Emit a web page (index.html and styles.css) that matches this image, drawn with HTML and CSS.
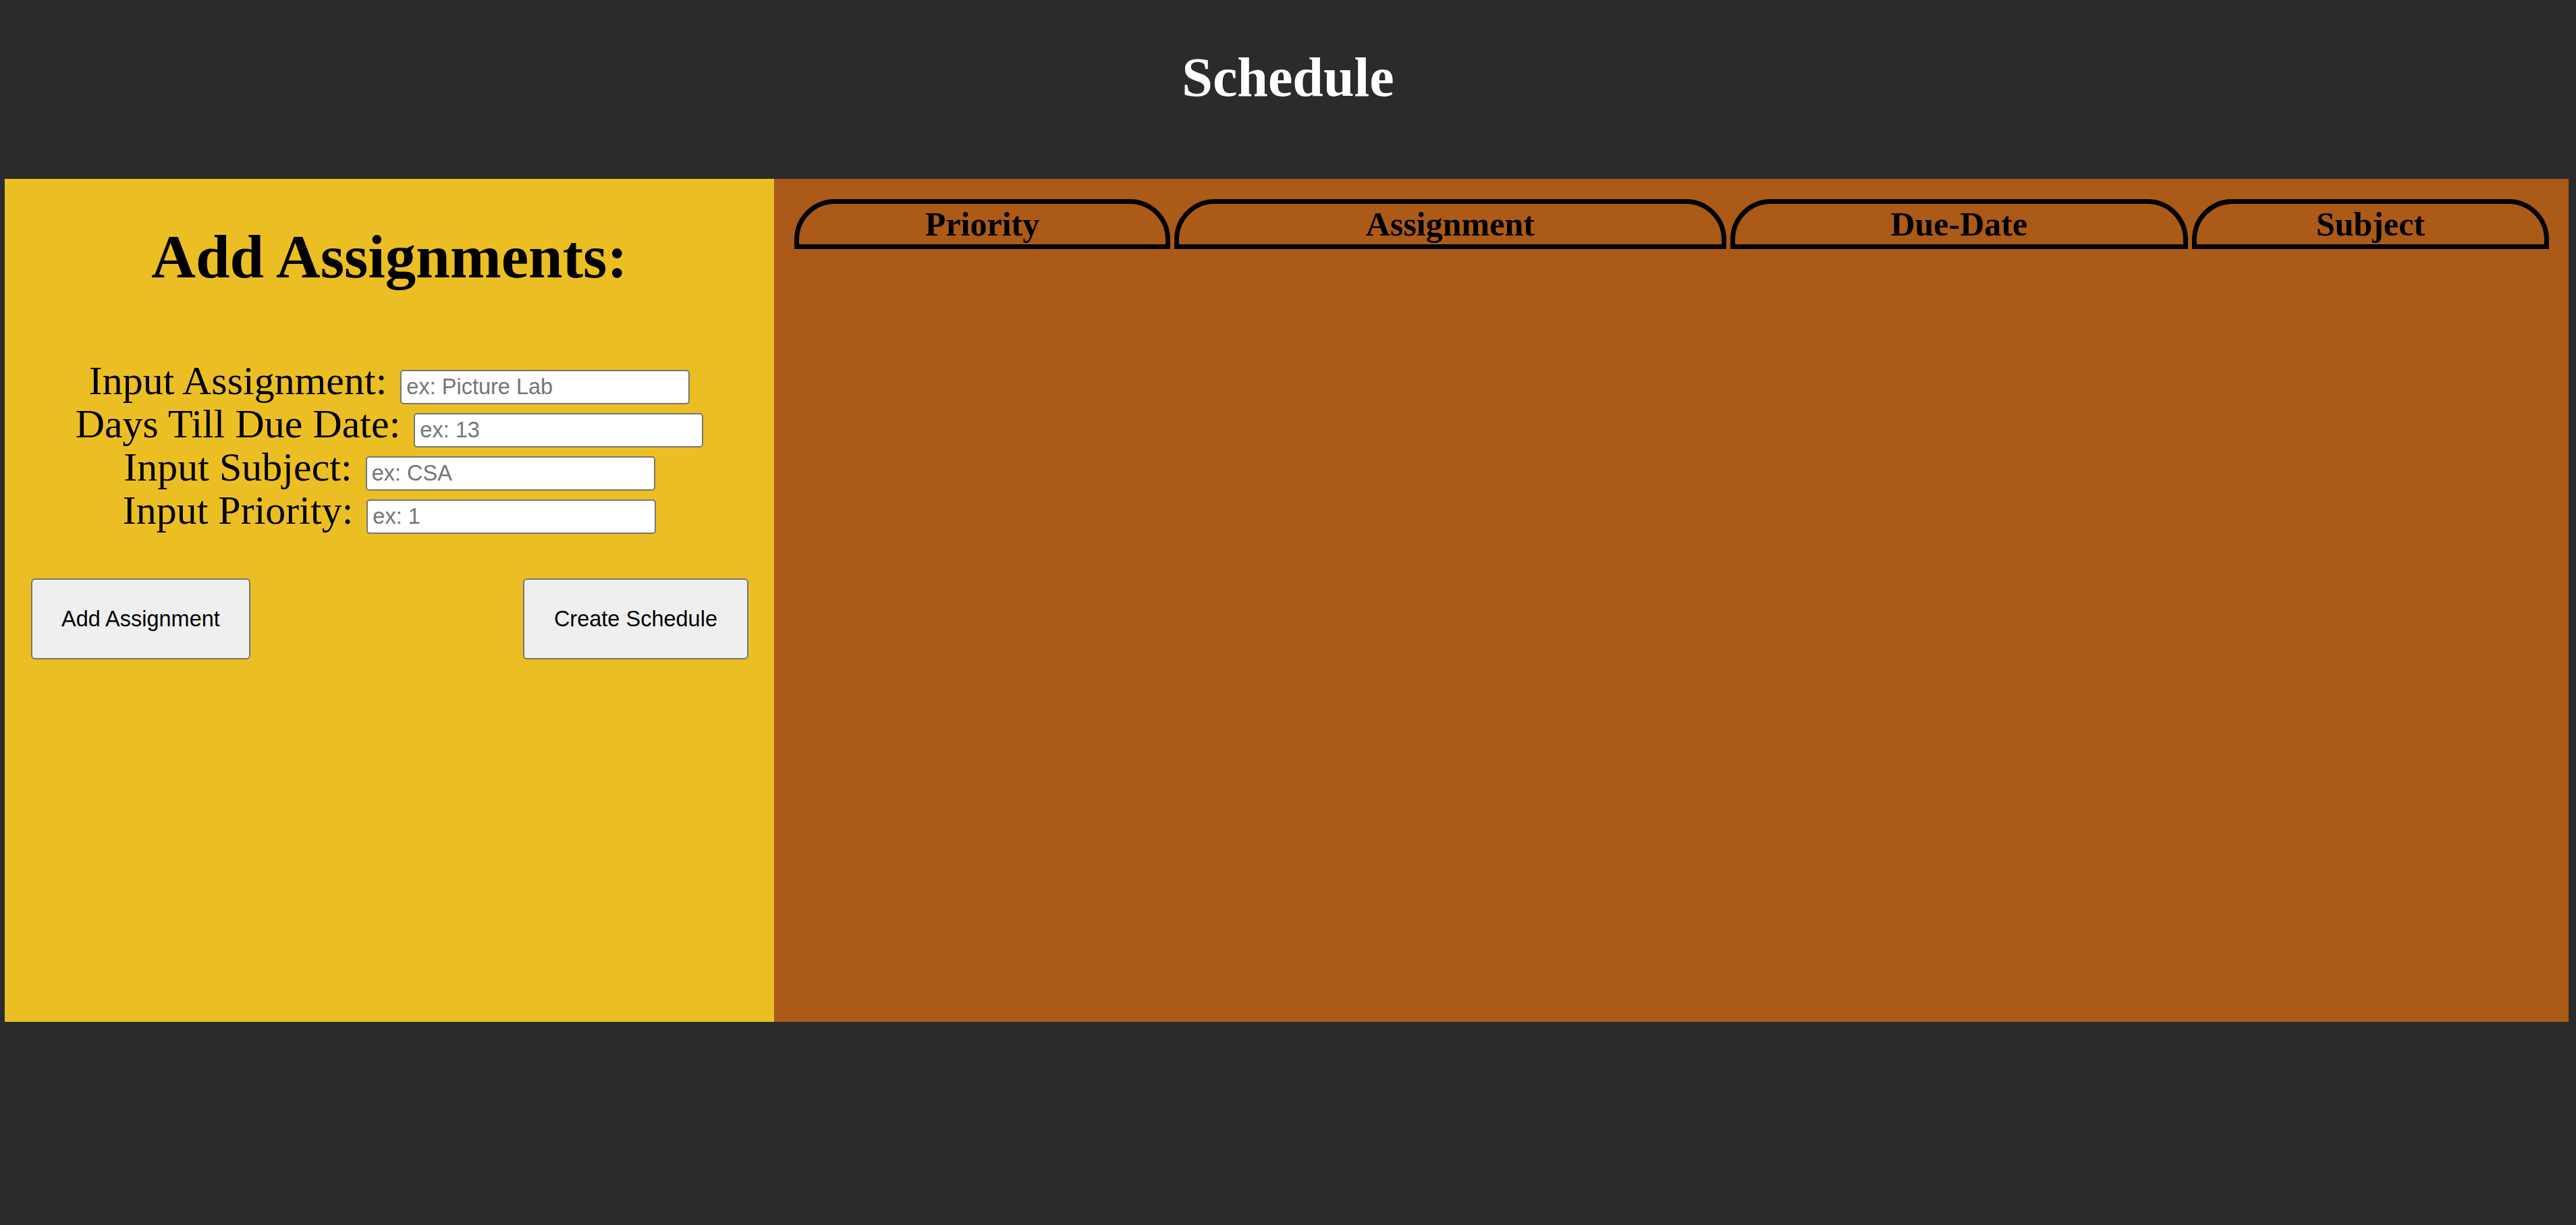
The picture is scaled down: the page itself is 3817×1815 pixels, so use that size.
FILE: index.html
```html
<!DOCTYPE html>
<html lang="en">
<head>
    <meta charset="UTF-8">
    <meta name="viewport" content="width=device-width, initial-scale=1.0">
    <title>Schedule</title>
    <link rel="stylesheet" href="styles.css">
</head>
<body>
    <!-- Title bar -->
    <div class="top">
        <h1>Schedule</h1>
    </div>

    <div class="main">
        <!-- Form side -->
        <div class="add-panel">
            <h2>Add Assignments:</h2>
            <div class="fields">
                <div class="field">Input Assignment: <input type="text" class="field-input" placeholder="ex: Picture Lab"></div>
                <div class="field">Days Till Due Date: <input type="text" class="field-input" placeholder="ex: 13"></div>
                <div class="field">Input Subject: <input type="text" class="field-input" placeholder="ex: CSA"></div>
                <div class="field">Input Priority: <input type="text" class="field-input" placeholder="ex: 1"></div>
            </div>
            <div class="actions">
                <button class="btn">Add Assignment</button>
                <button class="btn btn-wide">Create Schedule</button>
            </div>
        </div>

        <!-- Schedule side -->
        <div class="schedule-panel">
            <div class="tabs">
                <div class="tab">Priority</div>
                <div class="tab">Assignment</div>
                <div class="tab">Due-Date</div>
                <div class="tab">Subject</div>
            </div>
        </div>
    </div>
</body>
</html>
```

FILE: styles.css
```css
body {
    margin: 0;
    background-color: #2b2b2b;
    font-family: 'Liberation Serif', 'Times New Roman', serif;
    color: #000;
}
.top {
    height: 265px;
    box-sizing: border-box;
    padding-top: 74px;
    text-align: center;
}
.top h1 {
    margin: 0;
    font-size: 82px;
    line-height: 1;
    color: #fff;
}
.main {
    display: flex;
    height: 1249px;
    margin: 0 11px 0 7px;
}
.add-panel {
    width: 1140px;
    background-color: #ebbf23;
    text-align: center;
}
.add-panel h2 {
    margin: 70px 0 0;
    font-size: 91px;
    line-height: 1;
}
.fields {
    margin-top: 108px;
}
.field {
    height: 64px;
    font-size: 60px;
    line-height: 60px;
    white-space: nowrap;
}
.field-input {
    width: 429px;
    height: 51px;
    box-sizing: border-box;
    margin-left: 5px;
    padding: 0 7px;
    border: 2px solid #767676;
    border-radius: 5px;
    background: #fff;
    font-family: 'Liberation Sans', Arial, sans-serif;
    font-size: 32.5px;
}
.field-input::placeholder {
    color: #757575;
}
.actions {
    display: flex;
    justify-content: space-between;
    margin-top: 67px;
    padding: 0 38px 0 39px;
}
.btn {
    height: 120px;
    padding: 0 43px;
    border: 2px solid #767676;
    border-radius: 6px;
    background-color: #efefef;
    font-family: 'Liberation Sans', Arial, sans-serif;
    font-size: 32.5px;
    color: #000;
}
.btn-wide {
    padding: 0 44px;
}
.schedule-panel {
    flex: 1;
    background-color: #ab5a18;
    padding: 30px 29px 0 30px;
}
.tabs {
    display: grid;
    grid-template-columns: 556fr 816fr 677fr 528fr;
    gap: 6px;
}
.tab {
    height: 60px;
    border: 7px solid #000;
    border-radius: 60px 60px 0 0;
    font-size: 50px;
    font-weight: bold;
    line-height: 60px;
    text-align: center;
}
```
